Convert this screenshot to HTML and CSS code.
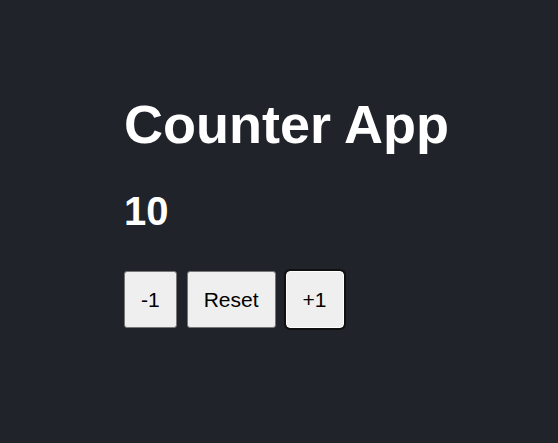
FILE: index.html
```html
<!DOCTYPE html>
<html>
<head>
<meta charset="utf-8">
<link rel="stylesheet" href="styles.css">
</head>
<body>
<div class="app">
  <h1 class="title">Counter App</h1>
  <h2 class="count">10</h2>
  <div class="controls">
    <button class="btn">-1</button>
    <button class="btn">Reset</button>
    <button class="btn btn-focus">+1</button>
  </div>
</div>
</body>
</html>
```

FILE: styles.css
```css
html, body {
  margin: 0;
  padding: 0;
  background: #20232a;
  height: 100%;
}
body {
  font-family: "Liberation Sans", Arial, sans-serif;
  color: #ffffff;
}
.app {
  padding: 93px 0 0 124px;
}
.title {
  margin: 0;
  font-size: 54px;
  font-weight: bold;
  line-height: 62px;
}
.count {
  margin: 33px 0 0 0;
  font-size: 40px;
  font-weight: bold;
  line-height: 46px;
}
.controls {
  margin-top: 37px;
  display: flex;
  gap: 10px;
}
.btn {
  font-family: "Liberation Sans", Arial, sans-serif;
  font-size: 21px;
  line-height: 23px;
  padding: 16px;
  background: #efefef;
  color: #000;
  border: 1px solid #767676;
  border-radius: 3px;
}
.btn-focus {
  border-color: #ffffff;
  outline: 2px solid #101010;
  outline-offset: 0;
  border-radius: 4px;
}
```
